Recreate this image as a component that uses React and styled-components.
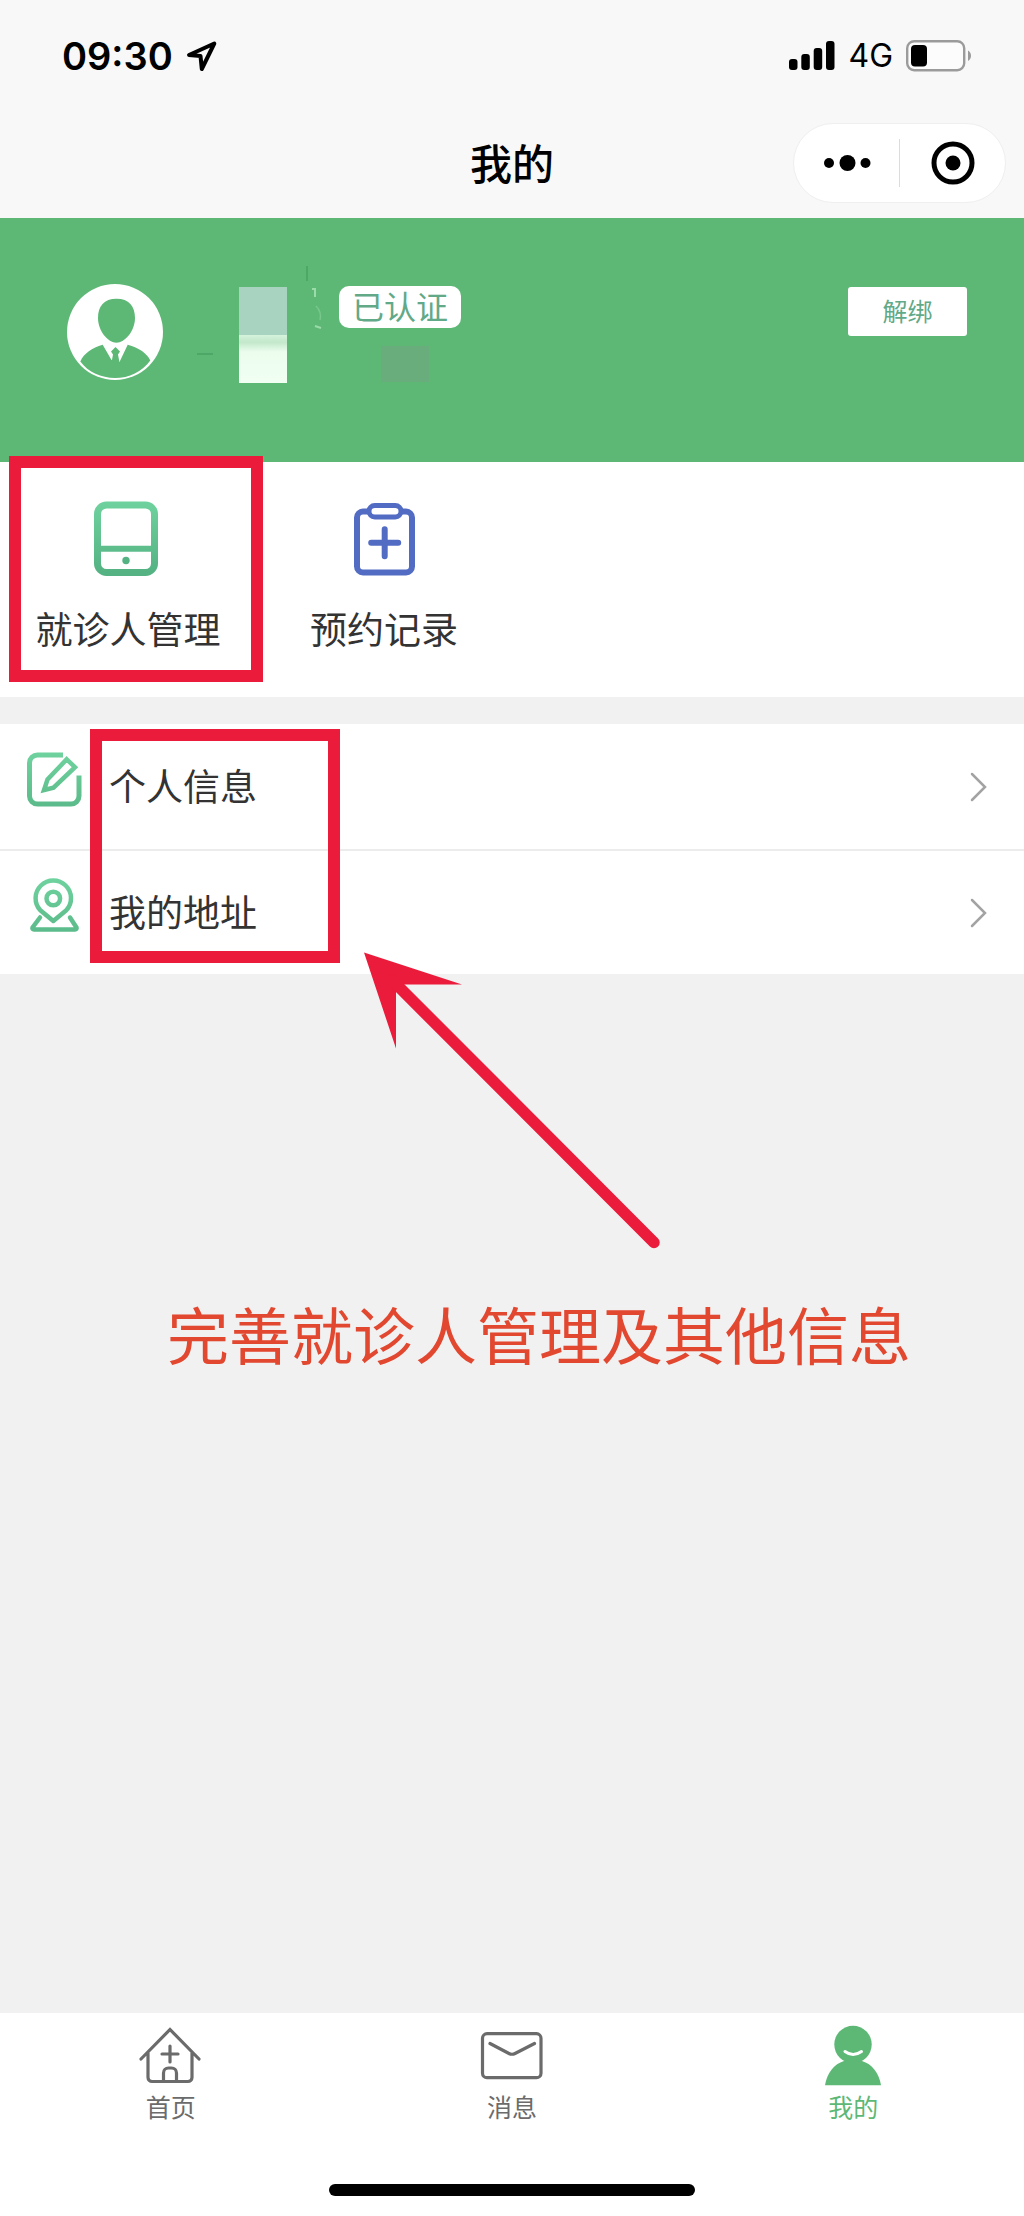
import React from 'react'
import styled, { createGlobalStyle } from 'styled-components'

const GlobalStyle = createGlobalStyle`
  * {
    box-sizing: border-box;
  }

  body {
    margin: 0;
    background: #f1f1f1;
    color: #333;
    font-family: 'Noto Sans CJK SC', sans-serif;
  }

  button {
    border: none;
    padding: 0;
    background: none;
    color: inherit;
    font-family: inherit;
    cursor: pointer;
  }

  a {
    color: inherit;
    text-decoration: none;
  }

  svg {
    display: block;
    flex-shrink: 0;
  }
`

const Page = styled.div`
  display: flex;
  flex-direction: column;
  min-height: 100vh;
`

const Header = styled.header`
  background: #f8f8f8;
  color: #000;
`

const StatusBar = styled.div`
  display: flex;
  align-items: center;
  justify-content: space-between;
  height: 112px;
  padding: 0 52px 0 62px;
  font-family: Inter, sans-serif;
`

const StatusGroup = styled.div`
  display: flex;
  align-items: center;
  gap: 13px;
`

const Time = styled.span`
  font-size: 38px;
  font-weight: 600;
  line-height: 48px;
`

const Network = styled.span`
  font-size: 32px;
  line-height: 48px;
`

const NavBar = styled.div`
  display: grid;
  grid-template-columns: 1fr auto 1fr;
  align-items: center;
  height: 106px;
  padding: 0 18px 4px;
`

const Title = styled.h1`
  grid-column: 2;
  margin: 0;
  padding-bottom: 2px;
  font-size: 42px;
  font-weight: 500;
  line-height: 60px;
`

const Capsule = styled.div`
  display: flex;
  align-items: center;
  justify-self: end;
  width: 213px;
  height: 80px;
  border: 1px solid #efefef;
  border-radius: 40px;
  background: #fff;
`

const CapsuleButton = styled.button`
  display: flex;
  flex: 1;
  align-items: center;
  justify-content: center;
  height: 48px;

  & + & {
    border-left: 1px solid #dcdcdc;
  }
`

const Profile = styled.section`
  display: flex;
  align-items: flex-start;
  height: 244px;
  padding: 66px 57px 0 67px;
  background: #5db876;
`

const MaskedName = styled.svg`
  margin: -22px 14px 0 32px;
`

const ProfileInfo = styled.div`
  flex: 1;
`

const Badge = styled.span`
  display: inline-block;
  height: 42px;
  margin-top: 2px;
  padding: 0 13px;
  border-radius: 10px;
  background: #fff;
  color: #62a988;
  font-size: 32px;
  line-height: 38px;
`

const MaskedPhone = styled.div`
  width: 48px;
  height: 36px;
  margin: 18px 0 0 42px;
  background: #69ad7c;
`

const UnbindButton = styled.button`
  width: 119px;
  height: 49px;
  margin-top: 3px;
  padding-bottom: 4px;
  border-radius: 3px;
  background: #fff;
  color: #62a988;
  font-size: 25px;
  line-height: 36px;
`

const Shortcuts = styled.nav`
  position: relative;
  display: grid;
  grid-template-columns: repeat(4, 1fr);
  height: 235px;
  padding-top: 37px;
  background: #fff;
`

const Shortcut = styled.a`
  display: flex;
  flex-direction: column;
  align-items: center;
  gap: 22px;
  font-size: 37px;
  line-height: 54px;
  white-space: nowrap;
`

const List = styled.nav`
  position: relative;
  margin-top: 27px;
  background: #fff;
`

const ListRow = styled.a`
  display: flex;
  align-items: center;
  gap: 27px;
  height: 125px;
  padding: 0 36px 0 26px;
  font-size: 37px;

  & + & {
    border-top: 2px solid #ececec;
  }
`

const RowLabel = styled.span`
  flex: 1;
  padding-bottom: 4px;
`

const Main = styled.main`
  flex: 1;
`

const Highlight = styled.div`
  position: absolute;
  top: ${props => props.$top}px;
  left: ${props => props.$left}px;
  width: ${props => props.$width}px;
  height: ${props => props.$height}px;
  border: 12px solid #eb1b3b;
  pointer-events: none;
`

const Arrow = styled.svg`
  position: absolute;
  top: 226px;
  left: 362px;
  pointer-events: none;
`

const Hint = styled.p`
  margin: 314px 0 0;
  padding-left: 167px;
  color: #e2472f;
  font-size: 62px;
  line-height: 90px;
`

const TabBar = styled.footer`
  height: 203px;
  padding-top: 12px;
  background: #fff;
`

const Tabs = styled.nav`
  display: grid;
  grid-template-columns: repeat(3, 1fr);
`

const Tab = styled.a`
  display: flex;
  flex-direction: column;
  align-items: center;
  color: ${props => (props.$active ? '#5db876' : '#6b6b6b')};
  font-size: 25px;
  line-height: 34px;
`

const HomeIndicator = styled.div`
  width: 366px;
  height: 12px;
  margin: 61px auto 0;
  border-radius: 6px;
  background: #000;
`

const Gradient = ({ id }) => (
  <defs>
    <linearGradient id={id} x1="0" y1="0" x2="0" y2="72" gradientUnits="userSpaceOnUse">
      <stop offset="0" stopColor="#6fd39f" />
      <stop offset="1" stopColor="#55b383" />
    </linearGradient>
  </defs>
)

const LocationIcon = () => (
  <svg width="32" height="32" viewBox="0 0 32 32" fill="none" stroke="#000" strokeWidth="4" strokeLinejoin="round">
    <path d="M3 15 28.3 3.5 15.8 29 14.5 16Z" />
  </svg>
)

const SignalIcon = () => (
  <svg width="46" height="30" viewBox="0 0 46 30">
    <rect x="0" y="18" width="8.5" height="11" rx="3" />
    <rect x="12.3" y="13" width="8.5" height="16" rx="3" />
    <rect x="24.7" y="7" width="8.5" height="22" rx="3" />
    <rect x="37" y="0" width="8.5" height="29" rx="3" />
  </svg>
)

const BatteryIcon = () => (
  <svg width="66" height="32" viewBox="0 0 66 32">
    <rect x="1.2" y="1.2" width="57" height="29" rx="7" fill="#fcfcfc" stroke="#9b9b9b" strokeWidth="2.4" />
    <rect x="5" y="5" width="16" height="21.5" rx="4" />
    <path d="M62 10.5c4 2 4 8.5 0 10.5z" fill="#9b9b9b" />
  </svg>
)

const AvatarIcon = () => (
  <svg width="96" height="96" viewBox="0 0 96 96">
    <circle cx="48" cy="48" r="48" fill="#fff" />
    <path
      d="M49.5 14.7C62 14.7 68 22 68 34c0 13-10 24.7-18.5 24.7S31 47 31 34c0-12 6-19.3 18.5-19.3ZM13.3 77.6C17 69 25 64 35.7 60.7L48 66l12.7-5.3C72 64 80 69 83.3 76.5 75 88 62 94 48 94S21.5 88.5 13.3 77.6Z"
      fill="#5db876"
    />
    <path d="M35.7 60.7 40 59.5 48.5 61 57 59 60.7 60.7 52.5 78 44.5 76Z" fill="#fff" />
    <path d="M48.5 63 53 67.5 51 70.5 52.5 78.5H44.5L46 70.5 44 67.5Z" fill="#5db876" />
  </svg>
)

// name is masked out, only faint traces of it stay visible
const NameMosaic = () => (
  <MaskedName width="130" height="122" viewBox="0 0 130 122" aria-hidden="true">
    <defs>
      <linearGradient id="mosaic" x1="0" y1="0" x2="0" y2="1">
        <stop offset="0" stopColor="#d5f3dc" />
        <stop offset="0.15" stopColor="#c2e8ca" />
        <stop offset="0.35" stopColor="#ecfdee" />
        <stop offset="1" stopColor="#f0fff2" />
      </linearGradient>
    </defs>
    <rect x="44" y="25" width="48" height="48" fill="#a7d3c0" />
    <rect x="44" y="73" width="48" height="48" fill="url(#mosaic)" />
    <path d="M2 92h16M112 4v15" stroke="#48a263" strokeWidth="1.5" />
    <path d="M117 27h3v8M120 64l6 2" fill="none" stroke="#9bdba9" strokeWidth="2" />
    <path d="M121 44q6 6 4 14" fill="none" stroke="#78c78c" strokeWidth="1.5" />
  </MaskedName>
)

const PatientIcon = () => (
  <svg width="72" height="80" viewBox="0 0 72 80" fill="none" stroke="url(#patient)" strokeWidth="7">
    <Gradient id="patient" />
    <rect x="5.5" y="6" width="57" height="67.5" rx="9" />
    <path d="M5 49.7h58" strokeWidth="6" />
    <circle cx="34" cy="61.5" r="3.7" fill="#55b383" stroke="none" />
  </svg>
)

const RecordIcon = () => (
  <svg width="72" height="80" viewBox="0 0 72 80" fill="none" stroke="#526cc4" strokeWidth="6" strokeLinecap="round">
    <path d="M20 12.5h-5a6 6 0 0 0-6 6v49a6 6 0 0 0 6 6h43a6 6 0 0 0 6-6v-49a6 6 0 0 0-6-6h-4" />
    <rect x="21" y="6.500" width="32" height="11.5" rx="5.7" strokeWidth="5" />
    <path d="M36.7 30.2v27M23.2 43.7h27" />
  </svg>
)

const EditIcon = () => (
  <svg width="56" height="72" viewBox="0 0 56 72" fill="none" stroke="url(#edit)" strokeWidth="5">
    <Gradient id="edit" />
    <path d="M37 4H11.5a8 8 0 0 0-8 8V45a8 8 0 0 0 8 8H45a8 8 0 0 0 8-8V24.5" />
    <path d="M40.7 8.3 49 16.2 27.5 36.7 18 39 21.5 28.5Z" strokeWidth="4.5" />
  </svg>
)

const AddressIcon = () => (
  <svg width="56" height="72" viewBox="0 0 56 72" fill="none" stroke="url(#address)" strokeWidth="4.5" strokeLinecap="round" strokeLinejoin="round">
    <Gradient id="address" />
    <path d="M27.3 44 14.3 33.2A17.7 17.7 0 1 1 40.3 33.2Z" />
    <circle cx="27.3" cy="21.5" r="6.8" />
    <path d="M14 40.5 6.5 50.500q-.5 2 1.5 2h41q2 0 1.5-2L44 40.5" />
  </svg>
)

const Chevron = () => (
  <svg width="18" height="30" viewBox="0 0 18 30" fill="none" stroke="#a3a3a3" strokeWidth="2.5" strokeLinecap="round">
    <path d="M2 2 15 15 2 28" />
  </svg>
)

const HomeIcon = () => (
  <svg width="64" height="64" viewBox="0 0 64 64" fill="none" stroke="#6b6b6b" strokeWidth="3.2" strokeLinecap="round">
    <path d="M2 34 31 4.500 60 34M9 28v24.5a4 4 0 0 0 4 4h36a4 4 0 0 0 4-4V28M31 21v16M23 29h16M24.5 56V48a5 5 0 0 1 5-5h3a5 5 0 0 1 5 5v8" />
  </svg>
)

const MessageIcon = () => (
  <svg width="64" height="64" viewBox="0 0 64 64" fill="none" stroke="#6b6b6b" strokeWidth="3.2" strokeLinecap="round">
    <rect x="2.5" y="8.7" width="58.5" height="44" rx="4.5" />
    <path d="M10 18.5 29 28.5q3 1.500 6 0L54.5 18.5" />
  </svg>
)

const MeIcon = () => (
  <svg width="64" height="64" viewBox="0 0 64 64">
    <path d="M4 60.3C6 48 13 39 23 36h18c10 3 17 12 19 24.3Z" fill="#5db876" />
    <circle cx="32" cy="19.5" r="18.7" fill="#5db876" />
    <path d="M24 26.500q8 6 16.500 0" fill="none" stroke="#fff" strokeWidth="3" strokeLinecap="round" />
  </svg>
)

export default function App() {
  return (
    <Page>
      <GlobalStyle />
      <Header>
        <StatusBar>
          <StatusGroup>
            <Time>09:30</Time>
            <LocationIcon />
          </StatusGroup>
          <StatusGroup>
            <SignalIcon />
            <Network>4G</Network>
            <BatteryIcon />
          </StatusGroup>
        </StatusBar>
        <NavBar>
          <Title>我的</Title>
          <Capsule>
            <CapsuleButton aria-label="更多">
              <svg width="48" height="18" viewBox="0 0 48 18">
                <circle cx="6" cy="9" r="5" />
                <circle cx="24.5" cy="9" r="8" />
                <circle cx="42.5" cy="9" r="5" />
              </svg>
            </CapsuleButton>
            <CapsuleButton aria-label="关闭">
              <svg width="44" height="44" viewBox="0 0 44 44">
                <circle cx="22" cy="22" r="19" fill="none" stroke="#000" strokeWidth="5" />
                <circle cx="22" cy="22" r="7.5" />
              </svg>
            </CapsuleButton>
          </Capsule>
        </NavBar>
      </Header>

      <Profile>
        <AvatarIcon />
        <NameMosaic />
        <ProfileInfo>
          <Badge>已认证</Badge>
          <MaskedPhone />
        </ProfileInfo>
        <UnbindButton>解绑</UnbindButton>
      </Profile>

      <Main>
        <Shortcuts>
          <Shortcut href="#patients">
            <PatientIcon />
            就诊人管理
          </Shortcut>
          <Shortcut href="#records">
            <RecordIcon />
            预约记录
          </Shortcut>
          <Highlight $top={-6} $left={9} $width={254} $height={226} />
        </Shortcuts>

        <List>
          <ListRow href="#info">
            <EditIcon />
            <RowLabel>个人信息</RowLabel>
            <Chevron />
          </ListRow>
          <ListRow href="#address">
            <AddressIcon />
            <RowLabel>我的地址</RowLabel>
            <Chevron />
          </ListRow>
          <Highlight $top={5} $left={90} $width={250} $height={234} />
          <Arrow width="300" height="300" viewBox="0 0 300 300">
            <path d="M2 2.5 100 34.5H40L34 42V98.5Z" fill="#eb1b3b" />
            <path d="M30 30 292 292.5" stroke="#eb1b3b" strokeWidth="11.5" strokeLinecap="round" />
          </Arrow>
        </List>

        <Hint>完善就诊人管理及其他信息</Hint>
      </Main>

      <TabBar>
        <Tabs>
          <Tab href="#home">
            <HomeIcon />
            首页
          </Tab>
          <Tab href="#messages">
            <MessageIcon />
            消息
          </Tab>
          <Tab href="#me" $active>
            <MeIcon />
            我的
          </Tab>
        </Tabs>
        <HomeIndicator />
      </TabBar>
    </Page>
  )
}
